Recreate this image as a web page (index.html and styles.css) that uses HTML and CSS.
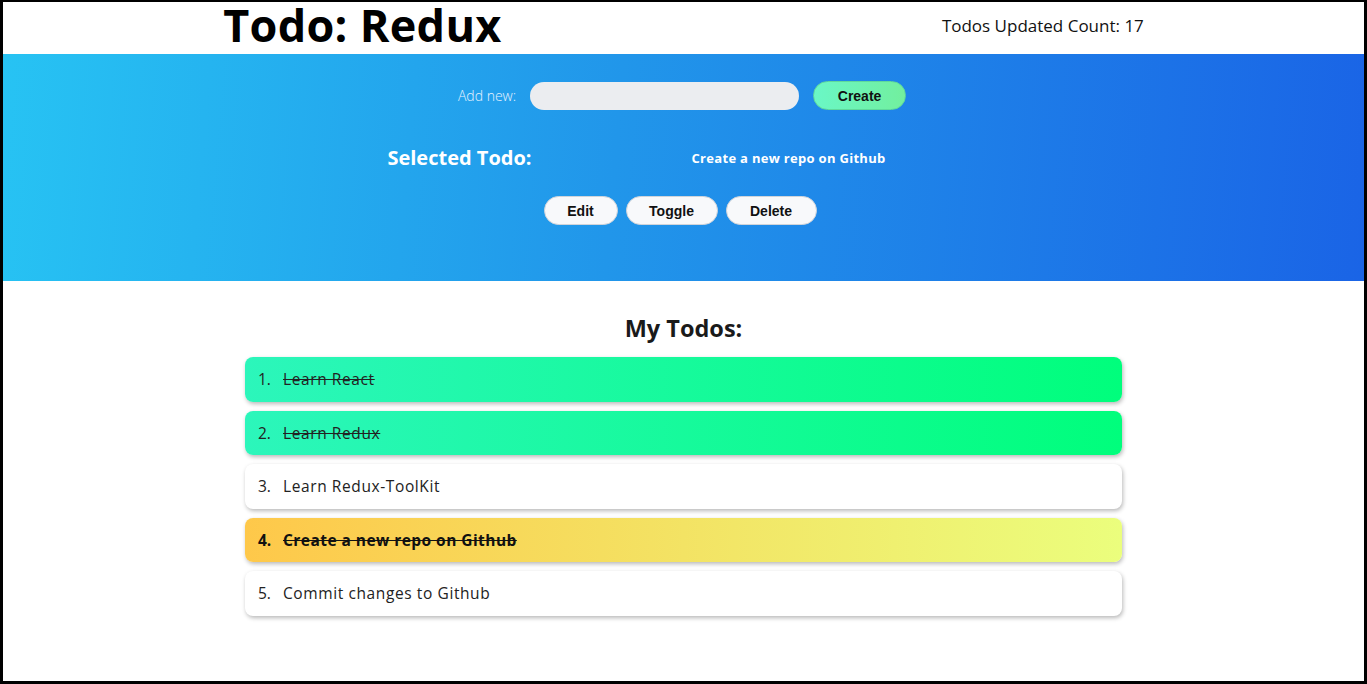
FILE: index.html
```html
<!DOCTYPE html>
<html>
<head>
<meta charset="utf-8">
<link rel="stylesheet" href="styles.css">
</head>
<body>
<div class="frame">
  <header class="header">
    <h1 class="title">Todo: Redux</h1>
    <div class="count">Todos Updated Count: 17</div>
  </header>
  <section class="banner">
    <div class="add-row">
      <label class="add-label">Add new:</label>
      <input class="add-input" type="text">
      <button class="btn btn-create">Create</button>
    </div>
    <div class="selected-row">
      <h2 class="selected-title">Selected Todo:</h2>
      <span class="selected-text">Create a new repo on Github</span>
    </div>
    <div class="actions">
      <button class="btn btn-action btn-edit">Edit</button>
      <button class="btn btn-action btn-toggle">Toggle</button>
      <button class="btn btn-action btn-delete">Delete</button>
    </div>
  </section>
  <section class="todos">
    <h2 class="todos-title">My Todos:</h2>
    <ul class="list">
      <li class="item done"><span class="num">1.</span><span class="text">Learn React</span></li>
      <li class="item done"><span class="num">2.</span><span class="text">Learn Redux</span></li>
      <li class="item"><span class="num">3.</span><span class="text">Learn Redux-ToolKit</span></li>
      <li class="item selected"><span class="num">4.</span><span class="text">Create a new repo on Github</span></li>
      <li class="item"><span class="num">5.</span><span class="text">Commit changes to Github</span></li>
    </ul>
  </section>
</div>
</body>
</html>
```
FILE: styles.css
```css
* { box-sizing: border-box; }
html, body { margin: 0; padding: 0; }
body {
  font-family: "Open Sans", "DejaVu Sans", sans-serif;
  background: #fff;
  color: #111;
}
.frame {
  width: 1367px;
  height: 684px;
  border-style: solid;
  border-color: #000;
  border-width: 2px 3px 3px 3px;
}
.header {
  height: 52px;
  display: flex;
  justify-content: space-around;
  align-items: flex-start;
}
.title {
  margin: 0;
  font-size: 45px;
  font-weight: 700;
  letter-spacing: 0.3px;
  color: #000;
  line-height: 45px;
}
.count {
  font-size: 17px;
  color: #111;
  line-height: 48px;
}
.banner {
  height: 227px;
  background: linear-gradient(95deg, #27c3f3 0%, #2196ea 45%, #1a64e6 100%);
  display: flex;
  flex-direction: column;
  align-items: center;
  padding-top: 27px;
}
.add-row {
  display: flex;
  align-items: center;
  margin-left: -3px;
}
.add-label {
  color: #e6f2ff;
  font-size: 14px;
  font-weight: 300;
  margin-right: 14px;
}
.add-input {
  width: 269px;
  height: 28px;
  border: none;
  border-radius: 14px;
  background: #ebedf0;
  outline: none;
  margin-right: 14px;
}
.btn {
  font-family: "Liberation Sans", Arial, sans-serif;
  font-weight: 700;
  font-size: 14px;
  color: #111;
  cursor: pointer;
  border-radius: 15px;
}
.btn-create {
  width: 93px;
  height: 29px;
  background: linear-gradient(90deg, #6af7c6, #72ef9e);
  border: 1px solid #5fd99b;
}
.selected-row {
  display: flex;
  align-items: center;
  margin-top: 34px;
  margin-right: 94px;
  gap: 160px;
}
.selected-title {
  margin: 0;
  color: #fff;
  font-size: 20px;
  font-weight: 700;
}
.selected-text {
  color: #fff;
  font-size: 13px;
  font-weight: 700;
  letter-spacing: 0.3px;
}
.actions {
  display: flex;
  gap: 8px;
  margin-top: 25px;
  margin-left: -7px;
}
.btn-action {
  height: 29px;
  background: #f8f9fb;
  border: 1px solid #d0d4da;
}
.btn-edit { width: 74px; }
.btn-toggle { width: 92px; }
.btn-delete { width: 91px; }
.todos {
  display: flex;
  flex-direction: column;
  align-items: center;
}
.todos-title {
  margin: 32px 0 0 0;
  font-size: 23.5px;
  font-weight: 700;
  color: #1a1a1a;
  line-height: 30px;
}
.list {
  list-style: none;
  margin: 14px 0 0 0;
  padding: 0;
  width: 877px;
  display: flex;
  flex-direction: column;
  gap: 9px;
}
.item {
  height: 44.5px;
  border-radius: 8px;
  background: #fff;
  box-shadow: 1px 2px 4px rgba(0, 0, 0, 0.28);
  display: flex;
  align-items: center;
  padding-left: 13px;
  font-size: 15.5px;
  letter-spacing: 0.6px;
  color: #222;
}
.num {
  width: 25px;
  letter-spacing: 0;
}
.item.done {
  background: linear-gradient(90deg, #2cf6bb 0%, #00fe7c 100%);
}
.item.done .text,
.item.selected .text {
  text-decoration: line-through;
}
.item.selected {
  background: linear-gradient(90deg, #fec84a 0%, #f3e364 50%, #ebfe7d 100%);
  font-weight: 700;
  letter-spacing: 0.45px;
  color: #111;
}
```
